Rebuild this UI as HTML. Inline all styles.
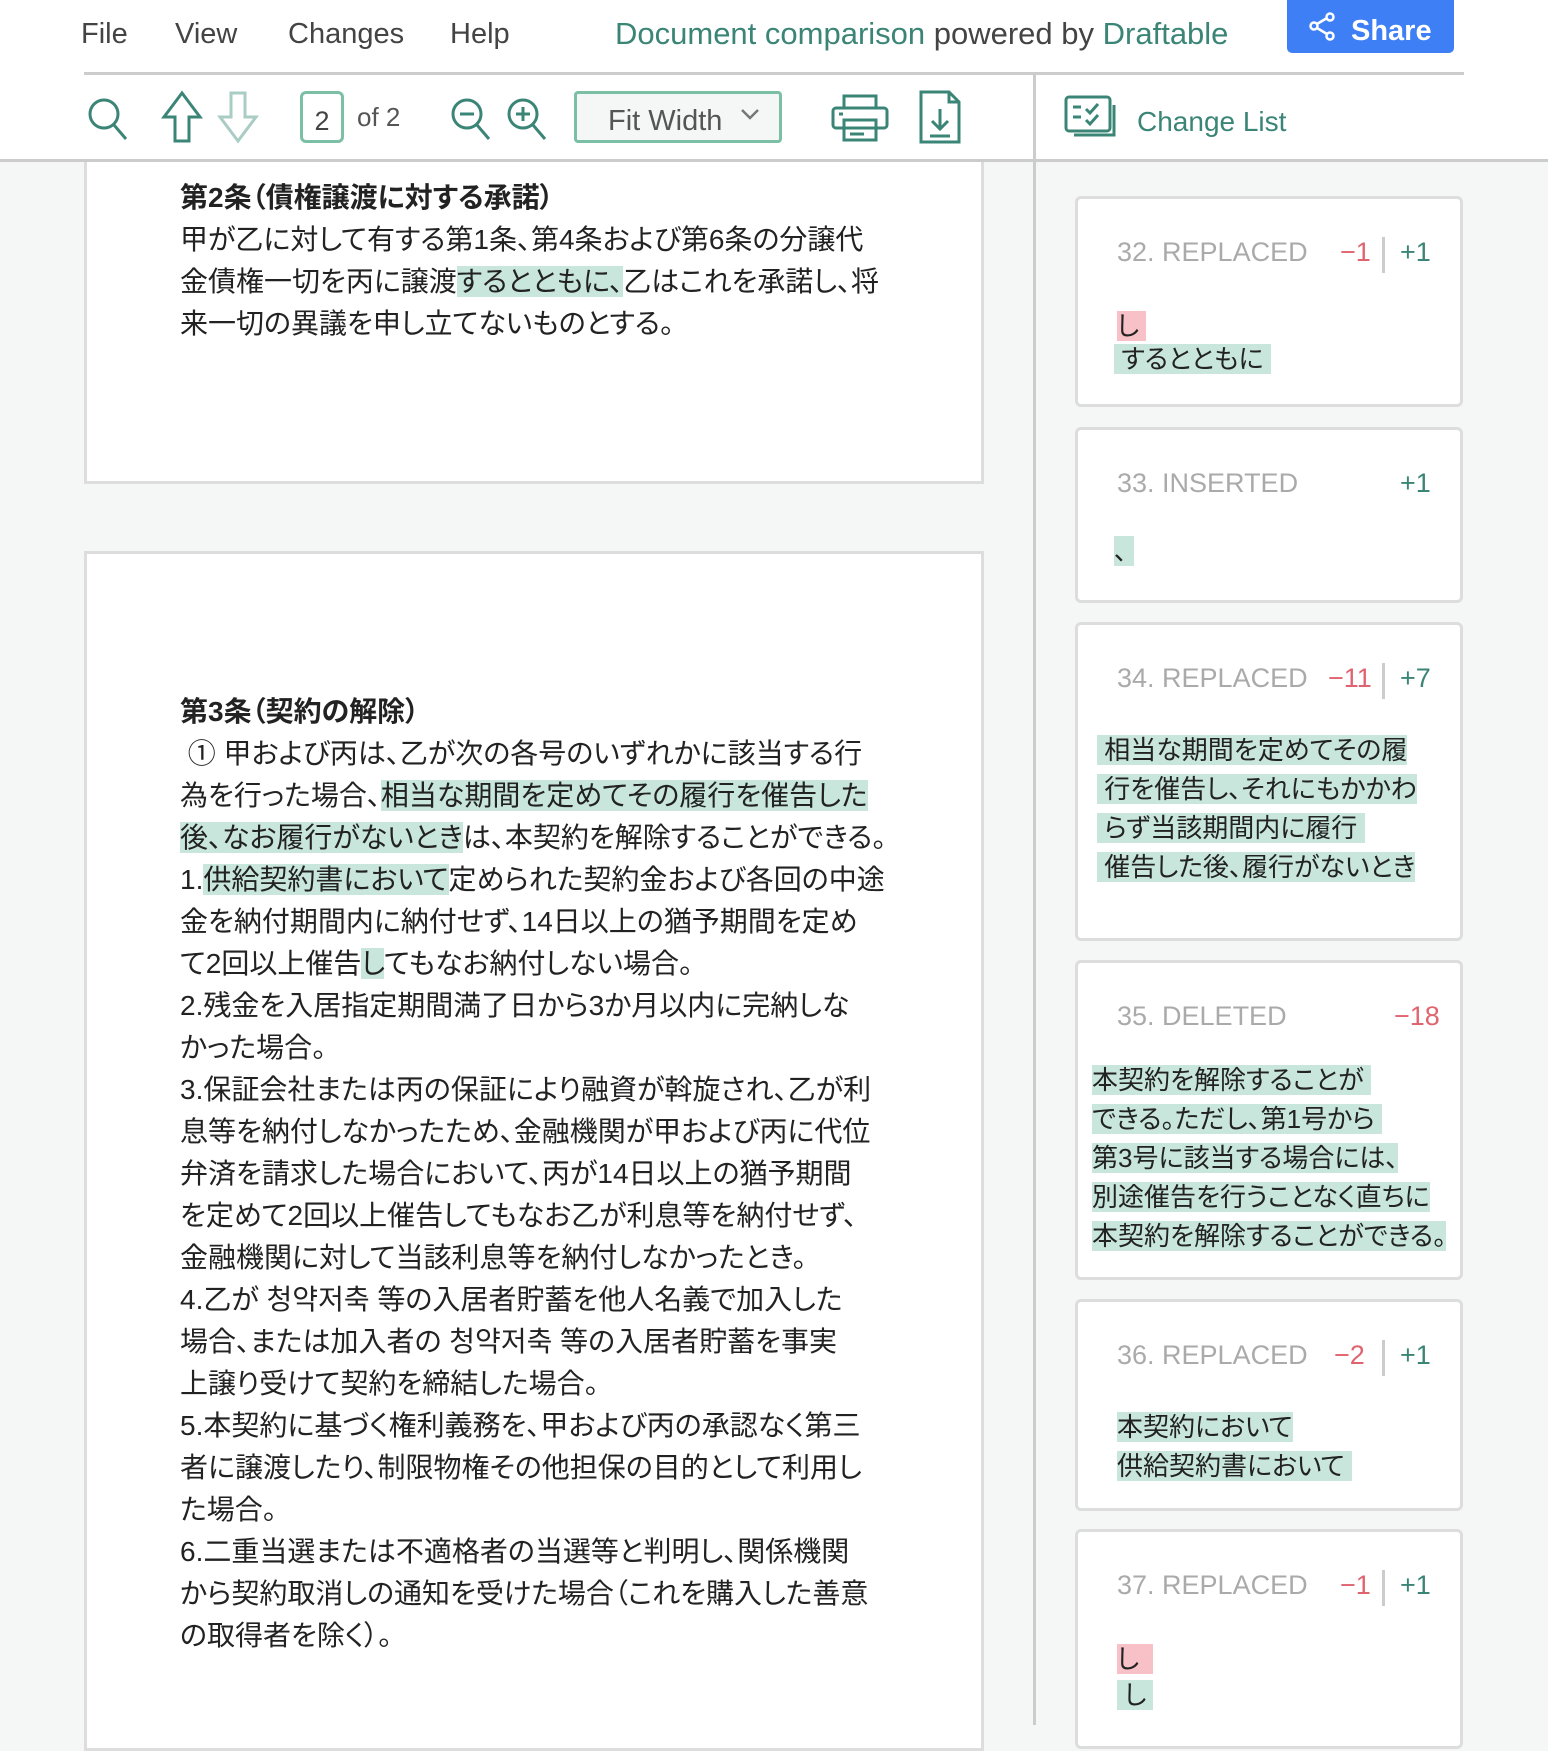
<!DOCTYPE html>
<html><head><meta charset="utf-8"><style>
*{margin:0;padding:0;box-sizing:border-box}
body{width:1548px;height:1725px;overflow:hidden;background:#f4f7f6;font-family:"Liberation Sans","Noto Sans CJK JP",sans-serif;position:relative;color:#222}
.a{position:absolute;white-space:nowrap}
.top{position:absolute;left:0;top:0;width:1548px;height:160px;background:#fff}
.menu{font-size:29px;color:#444;top:18px}
.teal{color:#3b8577}
.page{position:absolute;left:84px;width:900px;background:#fff;border:3px solid #ddd}
.doc{font-size:28px;line-height:42px;color:#222;left:180px;font-feature-settings:"palt"}
.g{background:#c8e6dc}
.p{background:#f7c1c7}
.card{position:absolute;left:1075px;width:388px;background:#fff;border:3px solid #ddd;border-radius:6px}
.hd{font-size:27px;color:#aaa;top:38px;left:39px}
.m{font-size:27px;color:#e06470}
.pl{font-size:27px;color:#3b8577}
.bar{position:absolute;width:3px;height:36px;background:#ccc}
.ct{font-size:26px;line-height:39px;color:#222;font-feature-settings:"palt"}
</style></head><body>
<div class="top"></div>
<div class="a menu" style="left:81px">File</div>
<div class="a menu" style="left:175px">View</div>
<div class="a menu" style="left:288px">Changes</div>
<div class="a menu" style="left:450px">Help</div>
<div class="a menu" style="left:615px;color:#444;font-size:31px;top:16px"><span class="teal">Document comparison</span> powered by <span class="teal">Draftable</span></div>
<div style="position:absolute;left:1287px;top:0;width:167px;height:53px;background:#3f7ff5;border-radius:0 0 5px 5px"></div>
<svg class="a" style="left:1308px;top:12px" width="30" height="30" viewBox="0 0 30 30" fill="none" stroke="#fff" stroke-width="2.5"><circle cx="22" cy="5" r="3.5"/><circle cx="6" cy="14" r="3.5"/><circle cx="22" cy="24" r="3.5"/><path d="M9 12l10-6M9 16l10 6"/></svg>
<div class="a" style="left:1351px;top:15px;font-size:29px;font-weight:bold;color:#fff">Share</div>
<div style="position:absolute;left:84px;top:72px;width:1380px;height:3px;background:#ccc"></div>
<div style="position:absolute;left:0;top:159px;width:1548px;height:3px;background:#ccc"></div>
<div style="position:absolute;left:1033px;top:75px;width:3px;height:1650px;background:#ccc"></div>
<svg class="a" style="left:86px;top:96px" width="44" height="46" viewBox="0 0 44 46" fill="none" stroke="#3b8577" stroke-width="3"><circle cx="18" cy="18" r="14"/><path d="M28 29l12 14"/></svg>
<svg class="a" style="left:160px;top:90px" width="44" height="54" viewBox="0 0 44 54" fill="none" stroke="#3b8577" stroke-width="3"><path d="M22 3L4 27h11v24h14V27h11z"/></svg>
<svg class="a" style="left:216px;top:90px" width="44" height="54" viewBox="0 0 44 54" fill="none" stroke="#a9ccc4" stroke-width="3"><path d="M22 51L4 27h11V3h14v24h11z"/></svg>
<div class="a" style="left:300px;top:91px;width:44px;height:52px;border:3px solid #7bbfa5;border-radius:6px;font-size:27px;color:#444;text-align:center;line-height:50px;padding-top:2px">2</div>
<div class="a" style="left:357px;top:102px;font-size:26px;color:#555">of 2</div>
<svg class="a" style="left:449px;top:96px" width="44" height="46" viewBox="0 0 44 46" fill="none" stroke="#3b8577" stroke-width="3"><circle cx="18" cy="18" r="14"/><path d="M28 29l12 14M11 18h14"/></svg>
<svg class="a" style="left:505px;top:96px" width="44" height="46" viewBox="0 0 44 46" fill="none" stroke="#3b8577" stroke-width="3"><circle cx="18" cy="18" r="14"/><path d="M28 29l12 14M11 18h14M18 11v14"/></svg>
<div class="a" style="left:574px;top:91px;width:208px;height:52px;border:3px solid #7bbfa5;border-radius:4px;background:#f4f7f6"></div>
<div class="a" style="left:608px;top:105px;font-size:29px;color:#555">Fit Width</div>
<svg class="a" style="left:740px;top:108px" width="20" height="14" viewBox="0 0 20 14" fill="none" stroke="#777" stroke-width="2.5"><path d="M2 2l8 8 8-8"/></svg>
<svg class="a" style="left:830px;top:94px" width="60" height="48" viewBox="0 0 60 48" fill="none" stroke="#3b8577" stroke-width="3"><rect x="14" y="2" width="32" height="12"/><rect x="3" y="14" width="54" height="20" rx="3"/><rect x="14" y="26" width="32" height="20"/><path d="M20 34h20M20 40h14M9 20h4"/></svg>
<svg class="a" style="left:918px;top:89px" width="44" height="56" viewBox="0 0 44 56" fill="none" stroke="#3b8577" stroke-width="3"><path d="M3 3h28l10 10v40H3z M31 3v10h10"/><path d="M22 20v20M14 32l8 8 8-8M12 47h20"/></svg>
<svg class="a" style="left:1064px;top:95px" width="56" height="44" viewBox="0 0 56 44" fill="none" stroke="#3b8577" stroke-width="3"><rect x="2" y="2" width="44" height="34" rx="3"/><path d="M10 40h40V10"/><path d="M9 12h8M9 22h8M22 14l4 4 8-9M22 25l4 4 8-9"/></svg>
<div class="a" style="left:1137px;top:106px;font-size:28px;color:#3b8577">Change List</div>
<div class="page" style="top:162px;height:322px;border-top:none"></div>
<div class="page" style="top:551px;height:1200px"></div>
<div class="a doc" style="top:177px;font-weight:bold">第2条（債権譲渡に対する承諾）</div>
<div class="a doc" style="top:219px">甲が乙に対して有する第1条、第4条および第6条の分譲代</div>
<div class="a doc" style="top:261px">金債権一切を丙に譲渡<span class="g">するとともに、</span>乙はこれを承諾し、将</div>
<div class="a doc" style="top:303px">来一切の異議を申し立てないものとする。</div>
<div class="a doc" style="top:691px;font-weight:bold">第3条（契約の解除）</div>
<div class="a doc" style="top:733px">&nbsp;① 甲および丙は、乙が次の各号のいずれかに該当する行</div>
<div class="a doc" style="top:775px">為を行った場合、<span class="g">相当な期間を定めてその履行を催告した</span></div>
<div class="a doc" style="top:817px"><span class="g">後、なお履行がないとき</span>は、本契約を解除することができる。</div>
<div class="a doc" style="top:859px">1.<span class="g">供給契約書において</span>定められた契約金および各回の中途</div>
<div class="a doc" style="top:901px">金を納付期間内に納付せず、14日以上の猶予期間を定め</div>
<div class="a doc" style="top:943px">て2回以上催告<span class="g">し</span>てもなお納付しない場合。</div>
<div class="a doc" style="top:985px">2.残金を入居指定期間満了日から3か月以内に完納しな</div>
<div class="a doc" style="top:1027px">かった場合。</div>
<div class="a doc" style="top:1069px">3.保証会社または丙の保証により融資が斡旋され、乙が利</div>
<div class="a doc" style="top:1111px">息等を納付しなかったため、金融機関が甲および丙に代位</div>
<div class="a doc" style="top:1153px">弁済を請求した場合において、丙が14日以上の猶予期間</div>
<div class="a doc" style="top:1195px">を定めて2回以上催告してもなお乙が利息等を納付せず、</div>
<div class="a doc" style="top:1237px">金融機関に対して当該利息等を納付しなかったとき。</div>
<div class="a doc" style="top:1279px">4.乙が 청약저축 等の入居者貯蓄を他人名義で加入した</div>
<div class="a doc" style="top:1321px">場合、または加入者の 청약저축 等の入居者貯蓄を事実</div>
<div class="a doc" style="top:1363px">上譲り受けて契約を締結した場合。</div>
<div class="a doc" style="top:1405px">5.本契約に基づく権利義務を、甲および丙の承認なく第三</div>
<div class="a doc" style="top:1447px">者に譲渡したり、制限物権その他担保の目的として利用し</div>
<div class="a doc" style="top:1489px">た場合。</div>
<div class="a doc" style="top:1531px">6.二重当選または不適格者の当選等と判明し、関係機関</div>
<div class="a doc" style="top:1573px">から契約取消しの通知を受けた場合（これを購入した善意</div>
<div class="a doc" style="top:1615px">の取得者を除く）。</div>
<div class="card" style="top:196px;height:211px">
<div class="a hd">32. REPLACED</div><div class="a m" style="left:262px;top:38px">−1</div><div class="bar" style="left:304px;top:38px"></div><div class="a pl" style="left:322px;top:38px">+1</div>
<div class="a ct" style="left:39px;top:108px"><span class="p">し&nbsp;</span></div>
<div class="a ct" style="left:36px;top:141px"><span class="g">&nbsp;するとともに&nbsp;</span></div>
</div>
<div class="card" style="top:427px;height:176px">
<div class="a hd">33. INSERTED</div><div class="a pl" style="left:322px;top:38px">+1</div>
<div class="a ct" style="left:36px;top:102px"><span class="g">、&nbsp;</span></div>
</div>
<div class="card" style="top:622px;height:319px">
<div class="a hd">34. REPLACED</div><div class="a m" style="left:250px;top:38px">−11</div><div class="bar" style="left:304px;top:38px"></div><div class="a pl" style="left:322px;top:38px">+7</div>
<div class="a ct" style="left:19px;top:106px"><span class="g">&nbsp;相当な期間を定めてその履</span><br><span class="g">&nbsp;行を催告し、それにもかかわ</span><br><span class="g">&nbsp;らず当該期間内に履行&nbsp;</span><br><span class="g">&nbsp;催告した後、履行がないとき</span></div>
</div>
<div class="card" style="top:960px;height:320px">
<div class="a hd">35. DELETED</div><div class="a m" style="left:316px;top:38px">−18</div>
<div class="a ct" style="left:14px;top:98px"><span class="g">本契約を解除することが&nbsp;</span><br><span class="g">できる。ただし、第1号から&nbsp;</span><br><span class="g">第3号に該当する場合には、</span><br><span class="g">別途催告を行うことなく直ちに</span><br><span class="g">本契約を解除することができる。</span></div>
</div>
<div class="card" style="top:1299px;height:212px">
<div class="a hd">36. REPLACED</div><div class="a m" style="left:256px;top:38px">−2</div><div class="bar" style="left:304px;top:38px"></div><div class="a pl" style="left:322px;top:38px">+1</div>
<div class="a ct" style="left:39px;top:106px"><span class="g">本契約において</span><br><span class="g">供給契約書において&nbsp;</span></div>
</div>
<div class="card" style="top:1529px;height:220px">
<div class="a hd">37. REPLACED</div><div class="a m" style="left:262px;top:38px">−1</div><div class="bar" style="left:304px;top:38px"></div><div class="a pl" style="left:322px;top:38px">+1</div>
<div class="a ct" style="left:39px;top:108px"><span class="p">し&nbsp;&nbsp;</span></div>
<div class="a ct" style="left:39px;top:144px"><span class="g">&nbsp;し&nbsp;</span></div>
</div>
</body></html>
